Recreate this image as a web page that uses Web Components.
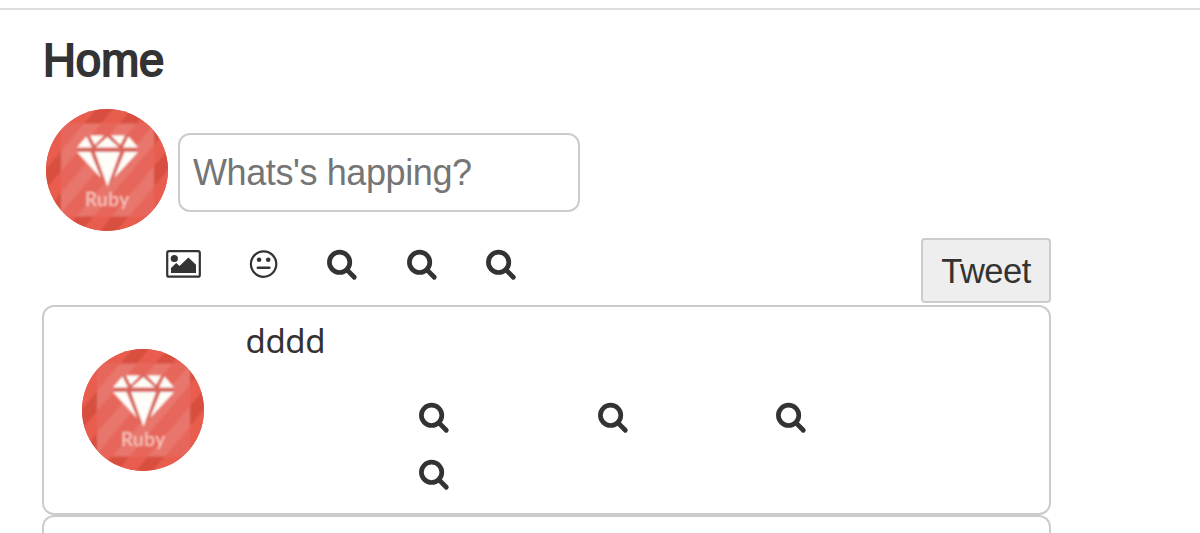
<!DOCTYPE html>
<html lang="en">
<head>
<meta charset="utf-8">
<title>Home</title>
<style>
body{
    margin: 0;
    height: 533px;
    overflow: hidden;
    background: #fff;
    color: #333;
    font-family: "Liberation Sans", Arial, sans-serif;
}
</style>
</head>
<body>
<home-page>
    <tweet-form placeholder="Whats's happing?"></tweet-form>
    <tweet-card>dddd</tweet-card>
    <tweet-card></tweet-card>
</home-page>

<script>
const icons = {
    search: `<svg width="32" height="32" viewBox="0 0 32 32" fill="none" stroke="#333">
        <circle cx="13.6" cy="13.3" r="10.2" stroke-width="4.7"/>
        <path d="M21 20.9L28.3 28.3" stroke-width="4.8" stroke-linecap="round"/></svg>`,
    image: `<svg width="36" height="32" viewBox="0 0 36 32" fill="#333">
        <rect x="1.2" y="2.1" width="32.6" height="25.6" rx="1.8" fill="none" stroke="#333" stroke-width="2.2"/>
        <circle cx="8.3" cy="9.5" r="3.6"/>
        <path d="M5 24.1V19.1L10.2 14L13.5 17L22.4 8.4L30 15.8V24.1Z"/></svg>`,
    face: `<svg width="32" height="32" viewBox="0 0 32 32" fill="#333">
        <circle cx="16.6" cy="15.1" r="12.7" fill="none" stroke="#333" stroke-width="2.2"/>
        <circle cx="12.1" cy="10.7" r="2.3"/><circle cx="21.2" cy="10.7" r="2.3"/>
        <path d="M10.8 18.8H22.4" stroke="#333" stroke-width="2.4" stroke-linecap="round"/></svg>`
};

class UiIcon extends HTMLElement{
    constructor(){
        super();
        this.attachShadow({mode:"open"});
        this.shadowRoot.innerHTML = `
        <style>
        :host{display:flex; justify-content:center; height:32px;}
        svg{display:block; flex:none;}
        </style>${icons[this.getAttribute('name') || 'search']}`;
    }
}

const avatar = document.createElement('template');
avatar.innerHTML = `
<style>
:host{display:block; flex:none; width:122px; height:122px; border-radius:50%; overflow:hidden;}
svg{display:block;}
</style>
<svg width="122" height="122" viewBox="0 0 122 122">
    <defs>
        <pattern id="outer" width="27" height="27" patternUnits="userSpaceOnUse" patternTransform="translate(15 0) rotate(40)">
            <rect width="27" height="27" fill="#e95d4f"/><rect width="13" height="27" fill="#d8503f"/>
        </pattern>
        <pattern id="inner" width="27" height="27" patternUnits="userSpaceOnUse" patternTransform="translate(15 0) rotate(40)">
            <rect width="27" height="27" fill="#e7665b"/><rect width="13" height="27" fill="#e8766c"/>
        </pattern>
        <filter id="soft" x="-10%" y="-10%" width="120%" height="120%"><feGaussianBlur stdDeviation="1.1"/></filter>
    </defs>
    <rect width="122" height="122" fill="#e65a4b"/>
    <g filter="url(#soft)">
        <rect x="-5" y="-5" width="132" height="132" fill="url(#outer)"/>
        <rect x="15" y="14.5" width="93" height="93" rx="3" fill="url(#inner)"/>
        <path d="M41 27H82L92 41L61.5 76L31 41Z" fill="#d9635c"/>
        <g fill="#fffdf8">
            <path d="M40.5 27.5L46 38.4H31Z"/>
            <path d="M44 26.6H58L48.8 36Z"/>
            <path d="M61.3 28L73 38.4H49.5Z"/>
            <path d="M65 26.6H79L74.2 36Z"/>
            <path d="M82.5 27.5L92 38.4H77Z"/>
            <path d="M31 43H44.5L55 69Z"/>
            <path d="M49 43H74L61.5 77.5Z"/>
            <path d="M78.5 43H92L68 69Z"/>
        </g>
        <text x="39" y="96.5" font-family="Lato, sans-serif" font-size="19" textLength="44" fill="#f8cdc5">Ruby</text>
    </g>
</svg>`;

class UserAvatar extends HTMLElement{
    constructor(){
        super();
        this.attachShadow({mode:"open"});
        this.shadowRoot.appendChild(avatar.content.cloneNode(true));
    }
}

const form = document.createElement('template');
form.innerHTML = `
<style>
:host{display:block; height:196px;}
.entry{display:flex; align-items:flex-start; gap:10px; padding-left:4px;}
input{
    box-sizing: border-box;
    width: 402px;
    height: 79px;
    margin: 24px 0 0;
    padding: 0 13px;
    border: 2px solid #ccc;
    border-radius: 12px;
    background: #fff;
    font: 36px "Liberation Sans", Arial, sans-serif;
    letter-spacing: -0.4px;
}
input::placeholder{color:#757575; opacity:1;}
.tools{display:flex; justify-content:space-between; align-items:flex-start; padding-left:102px; margin-top:7px;}
.icons{display:grid; grid-template-columns:repeat(5, 79.4px); padding-top:11px;}
button{
    box-sizing: border-box;
    width: 130px;
    height: 65px;
    margin: 0;
    padding: 2px 0 0;
    border: 2px solid #ccc;
    border-radius: 4px;
    background: #eee;
    color: #333;
    font: 34.5px "Liberation Sans", Arial, sans-serif;
    letter-spacing: -0.5px;
}
</style>
<div class="entry"><user-avatar></user-avatar><input type="text"></div>
<div class="tools">
    <div class="icons">
        <ui-icon name="image"></ui-icon>
        <ui-icon name="face"></ui-icon>
        <ui-icon name="search"></ui-icon>
        <ui-icon name="search"></ui-icon>
        <ui-icon name="search"></ui-icon>
    </div>
    <button type="button">Tweet</button>
</div>`;

class TweetForm extends HTMLElement{
    constructor(){
        super();
        this.attachShadow({mode:"open"});
        this.shadowRoot.appendChild(form.content.cloneNode(true));
        this.shadowRoot.querySelector('input').placeholder = this.getAttribute('placeholder');
    }
}

const card = document.createElement('template');
card.innerHTML = `
<style>
:host{
    display: flex;
    box-sizing: border-box;
    height: 210px;
    padding: 0 0 0 38px;
    border: 2px solid #ccc;
    border-radius: 12px;
}
/* an empty card is only its top edge */
:host(:empty){height:18px; border-bottom:0; border-radius:12px 12px 0 0;}
user-avatar{margin-top:42px;}
.content{padding-left:42px;}
p{
    margin: 12px 0 0;
    height: 83px;
    font: 33px/44px "Noto Sans", sans-serif;
    letter-spacing: -0.4px;
    text-indent: -0.5px;
}
.actions{
    display: grid;
    grid-template-columns: repeat(3, 178.5px);
    row-gap: 25px;
    padding-left: 99px;
}
</style>
<user-avatar></user-avatar>
<div class="content">
    <p><slot></slot></p>
    <div class="actions">
        <ui-icon></ui-icon>
        <ui-icon></ui-icon>
        <ui-icon></ui-icon>
        <ui-icon></ui-icon>
    </div>
</div>`;

class TweetCard extends HTMLElement{
    constructor(){
        super();
        this.attachShadow({mode:"open"});
        // no avatar or actions without a tweet
        if(this.hasChildNodes()){
            this.shadowRoot.appendChild(card.content.cloneNode(true));
        }else{
            this.shadowRoot.appendChild(card.content.querySelector('style').cloneNode(true));
        }
    }
}

const page = document.createElement('template');
page.innerHTML = `
<style>
:host{display:block; padding-top:8px;}
header{border-top:2px solid #dddde0;}
main{width:1009px; margin-left:42px;}
h1{
    margin: 0;
    padding: 25px 0 0 1px;
    box-sizing: border-box;
    height: 99px;
    font-size: 45.5px;
    font-weight: 400;
    line-height: 52px;
    -webkit-text-stroke: 1.9px #333;
}
</style>
<header></header>
<main>
    <h1>Home</h1>
    <slot></slot>
</main>`;

class HomePage extends HTMLElement{
    constructor(){
        super();
        this.attachShadow({mode:"open"});
        this.shadowRoot.appendChild(page.content.cloneNode(true));
    }
}

window.customElements.define('ui-icon',UiIcon);
window.customElements.define('user-avatar',UserAvatar);
window.customElements.define('tweet-form',TweetForm);
window.customElements.define('tweet-card',TweetCard);
window.customElements.define('home-page',HomePage);
</script>
</body>
</html>
